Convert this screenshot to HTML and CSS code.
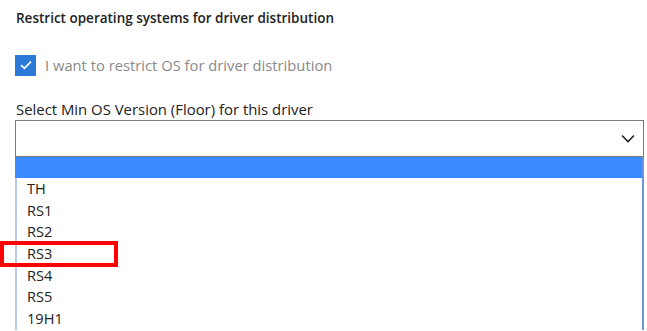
FILE: index.html
```html
<!DOCTYPE html>
<html lang="en">
<head>
<meta charset="UTF-8">
<title>Driver distribution</title>
<link rel="stylesheet" href="styles.css">
</head>
<body>
<div class="panel">
  <h2 class="title">Restrict operating systems for driver distribution</h2>
  <label class="check-row">
    <span class="checkbox">
      <svg width="14" height="14" viewBox="0 0 14 14"><path d="M2 7.2 L5.4 10.4 L12 3.6" fill="none" stroke="#fff" stroke-width="1.6"/></svg>
    </span>
    <span class="check-label">I want to restrict OS for driver distribution</span>
  </label>
  <div class="field-label">Select Min OS Version (Floor) for this driver</div>
  <div class="select">
    <svg class="chevron" width="14" height="9" viewBox="0 0 14 9"><path d="M1 1.5 L7 7.5 L13 1.5" fill="none" stroke="#222" stroke-width="1.6"/></svg>
  </div>
  <ul class="options">
    <li class="selected"></li>
    <li>TH</li>
    <li>RS1</li>
    <li>RS2</li>
    <li>RS3</li>
    <li>RS4</li>
    <li>RS5</li>
    <li>19H1</li>
  </ul>
</div>
<div class="highlight-box"></div>
</body>
</html>
```
FILE: styles.css
```css
html, body {
  margin: 0;
  background: #fff;
  font-family: "Open Sans", "Noto Sans", sans-serif;
  color: #222;
  overflow: hidden;
}
.panel {
  padding: 8px 3px 0 15px;
}
.title {
  font-size: 13.5px;
  font-weight: 600;
  line-height: 20px;
  margin: 0 0 0 1px;
}
.check-row {
  display: flex;
  align-items: center;
  gap: 9px;
  margin-top: 26px;
  height: 22px;
}
.checkbox {
  width: 21px;
  height: 21px;
  background: #2b79d8;
  display: flex;
  align-items: center;
  justify-content: center;
}
.check-label {
  font-size: 14.75px;
  color: #8a8a8a;
}
.field-label {
  font-size: 14.9px;
  line-height: 20px;
  margin-top: 23px;
  margin-left: 1px;
}
.select {
  height: 35px;
  border: 1px solid #7a7a7a;
  margin-top: 1px;
  position: relative;
  display: flex;
  align-items: center;
  justify-content: flex-end;
  padding-right: 8px;
}
.options {
  list-style: none;
  margin: 0;
  padding: 0;
  border-left: 2px solid #b8c8ee;
  border-right: 2px solid #6f94e0;
  font-size: 14.6px;
}
.options li {
  height: 21.7px;
  line-height: 21.7px;
  padding-left: 10px;
}
.options li.selected {
  height: 21px;
  background: #3b8bff;
  margin-left: -2px;
}
.highlight-box {
  position: absolute;
  left: 0;
  top: 241px;
  width: 110px;
  height: 18px;
  border: 4px solid #ff0000;
}
```
